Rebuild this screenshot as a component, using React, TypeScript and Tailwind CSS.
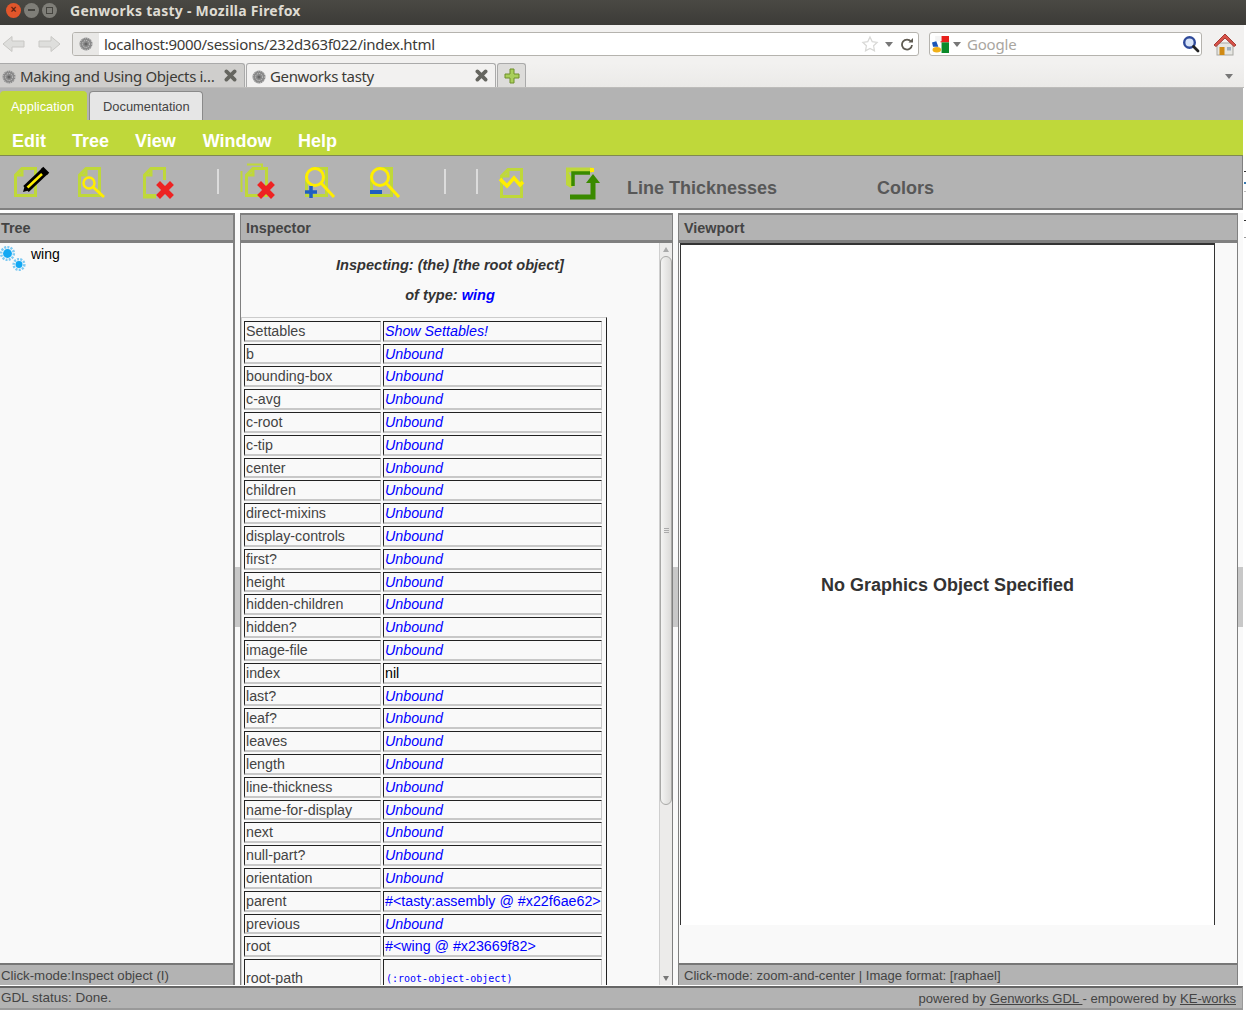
import React from "react";

const rows: [string, string][] = [
  ["Settables", "Show Settables!"],
  ["b", "Unbound"], ["bounding-box", "Unbound"], ["c-avg", "Unbound"], ["c-root", "Unbound"], ["c-tip", "Unbound"],
  ["center", "Unbound"], ["children", "Unbound"], ["direct-mixins", "Unbound"], ["display-controls", "Unbound"],
  ["first?", "Unbound"], ["height", "Unbound"], ["hidden-children", "Unbound"], ["hidden?", "Unbound"], ["image-file", "Unbound"],
  ["index", "nil"], ["last?", "Unbound"], ["leaf?", "Unbound"], ["leaves", "Unbound"], ["length", "Unbound"],
  ["line-thickness", "Unbound"], ["name-for-display", "Unbound"], ["next", "Unbound"], ["null-part?", "Unbound"], ["orientation", "Unbound"],
  ["parent", "#<tasty:assembly @ #x22f6ae62>"], ["previous", "Unbound"], ["root", "#<wing @ #x23669f82>"],
];

const LIME = "#bfd83a";
const YEL = "#ffee00";

function Page({ x, y = 167 }: { x: number; y?: number }) {
  return <path d={`M${x + 8} ${y + 1.5}H${x + 21.5}V${y + 28.5}H${x + 1.5}V${y + 8}Z M${x + 1.5} ${y + 8}H${x + 8}V${y + 1.5}`} fill="none" stroke={LIME} strokeWidth="3" />;
}
function RedX({ cx, cy }: { cx: number; cy: number }) {
  return <path d={`M${cx - 5} ${cy - 5}L${cx + 5} ${cy + 5}M${cx + 5} ${cy - 5}L${cx - 5} ${cy + 5}`} stroke="#ee2222" strokeWidth="5.5" strokeLinecap="square" />;
}
function Icon({ x, w, ml, children }: { x: number; w: number; ml: string; children: React.ReactNode }) {
  return <svg className={`shrink-0 mt-[4px] ${ml}`} width={w} height={42} viewBox={`${x} 160 ${w} 42`}>{children}</svg>;
}
function Sep({ ml }: { ml: string }) {
  return <div className={`w-[2px] h-[25px] mt-[13px] bg-[#dcdcdc] shrink-0 ${ml}`} />;
}
function Fav() {
  return (
    <svg width="14" height="14" viewBox="0 0 14 14" className="shrink-0">
      <circle cx="7" cy="7" r="6.5" fill="#8a8a8a" />
      <circle cx="7" cy="7" r="6" fill="none" stroke="#d8d8d8" strokeWidth="1" strokeDasharray="1 1.4" />
      <circle cx="7" cy="7" r="3.5" fill="none" stroke="#cfcfcf" strokeWidth="1" strokeDasharray="1 1" />
      <circle cx="7" cy="7" r="1.6" fill="#666" />
    </svg>
  );
}
function TabX() {
  return (
    <svg width="13" height="13" viewBox="0 0 12 12" className="shrink-0">
      <path d="M2.2 2.2L9.8 9.8M9.8 2.2L2.2 9.8" stroke="#65655f" strokeWidth="3.4" strokeLinecap="round" />
    </svg>
  );
}
function Arrow({ flip }: { flip?: boolean }) {
  return (
    <svg width="23" height="18" viewBox="0 0 23 18" className={flip ? "-scale-x-100" : ""}>
      <path d="M1 9L10 1.5V6H22V12H10V16.5Z" fill="#dededc" stroke="#c8c7c4" strokeWidth="1" strokeLinejoin="round" />
    </svg>
  );
}
function Caret() {
  return <div className="w-0 h-0 border-l-[4px] border-r-[4px] border-t-[5px] border-l-transparent border-r-transparent border-t-[#777]" />;
}
function Gear({ cx, cy, r }: { cx: number; cy: number; r: number }) {
  return (
    <g>
      <circle cx={cx} cy={cy} r={r + 1.3} fill="none" stroke="#7cc9f2" strokeWidth="2.6" strokeDasharray="2 1.2" />
      <circle cx={cx} cy={cy} r={r} fill="#d5effd" />
      <circle cx={cx} cy={cy} r={r - 0.6} fill="#12a8f3" />
    </g>
  );
}

function Cell({ w, children, extra = "" }: { w: string; children: React.ReactNode; extra?: string }) {
  return (
    <div className={`${w} h-full shrink-0 border-t border-l border-t-[#222] border-l-[#222] border-b-2 border-r border-b-[#c8c8c8] border-r-[#c8c8c8] overflow-hidden whitespace-nowrap leading-[19px] ${extra}`}>
      {children}
    </div>
  );
}

function PanelHead({ children, pl }: { children: React.ReactNode; pl: string }) {
  return (
    <div className={`h-[30px] shrink-0 bg-[#b3b3b3] border-t-2 border-b-[3px] border-t-[#808080] border-b-[#808080] font-bold text-[14.4px] leading-[27px] text-[#444] ${pl}`}>
      {children}
    </div>
  );
}
function Status({ children, size }: { children: React.ReactNode; size: string }) {
  return (
    <div className={`h-[22px] shrink-0 bg-[#b3b3b3] border-t-2 border-t-[#777] leading-[22px] pl-[1px] text-[#444] whitespace-nowrap ${size}`}>
      {children}
    </div>
  );
}

export default function App() {
  return (
    <div className="relative w-[1246px] h-[1011px] overflow-hidden bg-white font-['Liberation_Sans',Arial,sans-serif]">
      {/* window title */}
      <div className="h-[25px] bg-gradient-to-b from-[#4a4944] to-[#3c3b37] flex items-center pb-[5px]">
        <div className="w-[15px] h-[15px] ml-[6px] rounded-full bg-[#e2562b] text-[#5a2010] flex items-center justify-center text-[10px] font-bold leading-none">×</div>
        <div className="w-[15px] h-[15px] ml-[3px] rounded-full bg-[#7f7e78] flex items-center justify-center"><div className="w-[7px] h-[2px] bg-[#45443f]" /></div>
        <div className="w-[15px] h-[15px] ml-[3px] rounded-full bg-[#7f7e78] flex items-center justify-center"><div className="w-[7px] h-[7px] border border-[#45443f]" /></div>
        <span className="ml-[13px] text-[14px] font-bold text-[#dfdbd2] font-['Noto_Sans',sans-serif] tracking-[0.25px]">Genworks tasty - Mozilla Firefox</span>
      </div>

      {/* navigation bar */}
      <div className="w-[1244px] h-[38px] bg-[#f2f1f0] flex items-center">
        <div className="ml-[2px]"><Arrow /></div>
        <div className="ml-[13px]"><Arrow flip /></div>
        <div className="ml-[11px] w-[847px] h-[24px] bg-white border border-[#b5b3ae] rounded-[3px] flex items-center overflow-hidden">
          <div className="w-[26px] h-full bg-[#e9e8e6] flex items-center justify-center shrink-0"><Fav /></div>
          <span className="ml-[5px] text-[15px] text-[#3c3b37] font-['Noto_Sans',sans-serif] tracking-[-0.3px] whitespace-nowrap">localhost:9000/sessions/232d363f022/index.html</span>
          <div className="ml-auto flex items-center mr-[2px]">
            <svg width="18" height="18" viewBox="0 0 18 18"><path d="M9 2l2.2 4.6 5 .7-3.6 3.5.9 5L9 13.4 4.500 15.800l.9-5L1.800 7.300l5-.7z" fill="#fff" stroke="#d8d8d6" strokeWidth="1.200" /></svg>
            <div className="ml-[6px]"><Caret /></div>
            <svg className="ml-[7px] mr-[2px]" width="14" height="14" viewBox="0 0 14 14"><path d="M11 4.500A5 5 0 1 0 12 8" fill="none" stroke="#5f5b52" strokeWidth="1.800" /><path d="M8.500 5.500H13V1z" fill="#5f5b52" /></svg>
          </div>
        </div>
        <div className="ml-[10px] w-[273px] h-[24px] bg-white border border-[#b5b3ae] rounded-[3px] flex items-center">
          <svg className="ml-[2px] shrink-0" width="17" height="17" viewBox="0 0 16 16">
            <rect x="8" y="0" width="8" height="6" fill="#e8211c" /><rect x="9" y="6" width="7" height="10" fill="#0b8a2a" />
            <rect x="3" y="0" width="6" height="5" fill="#f4f4f4" /><path d="M0 6l4-1 2 5H1z" fill="#1b55b8" /><ellipse cx="4.500" cy="13" rx="4" ry="2.600" fill="#f0b018" />
          </svg>
          <div className="ml-[4px]"><Caret /></div>
          <span className="ml-[6px] text-[15px] text-[#a9a69f] font-['Noto_Sans',sans-serif] tracking-[-0.2px]">Google</span>
          <svg className="ml-auto mr-[1px]" width="18" height="18" viewBox="0 0 18 18">
            <circle cx="7.500" cy="7.500" r="5.300" fill="#d8e4f8" stroke="#2f4a9a" strokeWidth="2.400" /><path d="M11.500 11.500L16 16" stroke="#222" strokeWidth="2.800" strokeLinecap="round" />
          </svg>
        </div>
        <svg className="ml-[11px]" width="24" height="24" viewBox="0 0 24 24">
          <rect x="4" y="11" width="16" height="12" fill="#e6e6e2" stroke="#a8a8a2" strokeWidth="1" />
          <path d="M1 13L12 2l11 11-2 1.500L12 6 3 14.500z" fill="#d9534a" stroke="#a53c34" strokeWidth="1" />
          <rect x="6.500" y="15" width="5" height="8" fill="#d08a14" /><rect x="14" y="15" width="4" height="3.500" fill="#9fb0bf" />
        </svg>
      </div>

      {/* browser tabs */}
      <div className="w-[1244px] h-[25px] bg-gradient-to-b from-[#f2f1f0] to-[#ebeae8] border-b border-[#bdbcba] flex items-end text-[15px] text-[#3c3b37] font-['Noto_Sans',sans-serif] tracking-[-0.36px]">
        <div className="w-[245px] h-[24px] bg-[#cfcecc] border-t border-r border-[#aaa] rounded-tr-[3px] flex items-center pl-[2px] pr-[7px] pt-[2px]">
          <Fav /><span className="ml-[4px] whitespace-nowrap">Making and Using Objects i…</span><div className="ml-auto mb-[2px]"><TabX /></div>
        </div>
        <div className="ml-[1px] w-[250px] h-[24px] bg-[#f2f1f0] border-t border-x border-[#aaa] rounded-t-[3px] flex items-center pl-[5px] pr-[7px] pt-[2px]">
          <Fav /><span className="ml-[4px] whitespace-nowrap">Genworks tasty</span><div className="ml-auto mb-[2px]"><TabX /></div>
        </div>
        <div className="ml-[1px] w-[29px] h-[24px] bg-[#dddcda] border border-b-0 border-[#aaa] rounded-t-[3px] flex items-center justify-center">
          <svg width="16" height="16" viewBox="0 0 16 16"><path d="M6 1h4v5h5v4h-5v5H6v-5H1V6h5z" fill="#a9cf5a" stroke="#6f8f2a" strokeWidth="1" /></svg>
        </div>
        <div className="ml-auto mr-[11px] mb-[8px]"><Caret /></div>
      </div>

      {/* application */}
      <div className="w-[1243px]">
        <div className="h-[32px] bg-[#b3b3b3] flex items-end text-[12.9px]">
          <div className="w-[87px] h-[29px] bg-[#bfd83a] rounded-t-[4px] text-white pl-[11px] leading-[31px]">Application</div>
          <div className="ml-[2px] w-[114px] h-[29px] bg-[#e6e6e6] border border-b-0 border-[#8a8a8a] rounded-t-[4px] text-[#444] pl-[13px] leading-[30px]">Documentation</div>
        </div>
        <div className="h-[36px] bg-[#bfd83a] border-b border-[#808a50] flex items-center pt-[8px] text-white font-bold text-[18px]">
          <span className="ml-[12px]">Edit</span>
          <span className="ml-[26px]">Tree</span>
          <span className="ml-[26px]">View</span>
          <span className="ml-[27px]">Window</span>
          <span className="ml-[26.5px]">Help</span>
        </div>
        <div className="h-[54px] bg-[#b3b3b3] border-r border-r-[#808080] border-b-2 border-b-[#808080] flex items-start">
          <Icon x={12} w={40} ml="ml-[12px]">
            <Page x={14} />
            <path d="M26 189L45 171" stroke="#000" strokeWidth="8" /><path d="M27 188L42 174" stroke={YEL} strokeWidth="2.500" />
            <path d="M42 168l6 6" stroke="#000" strokeWidth="3.500" /><path d="M25 185l-2 7 7-2z" fill="#000" />
          </Icon>
          <Icon x={76} w={32} ml="ml-[24px]">
            <Page x={78} />
            <circle cx="89" cy="183" r="5.500" fill="none" stroke={YEL} strokeWidth="2.500" /><path d="M93 187L104 197" stroke={YEL} strokeWidth="2.800" />
          </Icon>
          <Icon x={141} w={36} ml="ml-[33px]">
            <Page x={143} /><rect x="156" y="180" width="20" height="20" fill="#b3b3b3" /><path d="M143 197H156" stroke={LIME} strokeWidth="3" /><RedX cx={165} cy={190} />
          </Icon>
          <Sep ml="ml-[40px]" />
          <Icon x={239} w={38} ml="ml-[20px]">
            <path d="M247 164.500H262V168M241.500 171V192" fill="none" stroke={LIME} strokeWidth="2" />
            <Page x={245} /><RedX cx={266} cy={190} />
          </Icon>
          <Icon x={303} w={34} ml="ml-[26px]">
            <Page x={305} />
            <circle cx="315" cy="177" r="8.500" fill="#b3b3b3" stroke={YEL} strokeWidth="3" /><path d="M321 183L334 197" stroke={YEL} strokeWidth="3" />
            <path d="M305 192H317M311 186V198" stroke="#1f5fc0" strokeWidth="3.500" />
          </Icon>
          <Icon x={368} w={34} ml="ml-[31px]">
            <Page x={370} />
            <circle cx="380" cy="177" r="8.500" fill="#b3b3b3" stroke={YEL} strokeWidth="3" /><path d="M386 183L399 197" stroke={YEL} strokeWidth="3" />
            <path d="M370 192H382" stroke="#1f5fc0" strokeWidth="4" />
          </Icon>
          <Sep ml="ml-[42px]" />
          <Sep ml="ml-[30px]" />
          <Icon x={498} w={28} ml="ml-[20px]">
            <Page x={500} y={168} />
            <path d="M500 179L507 186L514 178L520 185L523 182" fill="none" stroke={YEL} strokeWidth="3.500" />
          </Icon>
          <Icon x={562} w={42} ml="ml-[36px]">
            <path d="M566 170H592" stroke={LIME} strokeWidth="5" /><path d="M566 168V185l5 3 4-4" fill={LIME} />
            <path d="M590 168h4v4h-4z" fill={YEL} />
            <path d="M573 186V173H590" fill="none" stroke="#3a8a00" strokeWidth="3.500" />
            <path d="M570 197H593V180" fill="none" stroke="#3a8a00" strokeWidth="5" />
            <path d="M586 183L593 174L600 183z" fill="#3a8a00" />
          </Icon>
          <span className="ml-[23px] w-[250px] shrink-0 mt-[21px] font-bold text-[18px] leading-[22px] text-[#585858]">Line Thicknesses</span>
          <span className="mt-[21px] font-bold text-[18px] leading-[22px] text-[#585858]">Colors</span>
        </div>

        {/* panels */}
        <div className="mt-[3px] h-[772px] flex bg-[#f9f9f9]">
          <section className="w-[235px] shrink-0 flex flex-col border-r-2 border-r-[#808080]">
            <PanelHead pl="pl-[1px]">Tree</PanelHead>
            <div className="flex-1 min-h-0 flex items-start">
              <svg className="mt-[2px] shrink-0" width="28" height="28" viewBox="0 0 28 28">
                <Gear cx={7.500} cy={8.500} r={5} /><Gear cx={19} cy={19.500} r={4} />
              </svg>
              <span className="ml-[3px] text-[14px] leading-[20px] mt-[1px] text-black">wing</span>
            </div>
            <Status size="text-[13.25px]">Click-mode:Inspect object (I)</Status>
          </section>

          <div className="w-[5px] shrink-0 flex items-center"><div className="w-full h-[60px] bg-[#c8c8c8] mt-[-4px]" /></div>

          <section className="w-[433px] shrink-0 flex flex-col border-x border-[#808080] relative">
            <PanelHead pl="pl-[5px]">Inspector</PanelHead>
            <div className="flex-1 min-h-0 flex overflow-hidden">
              <div className="w-[418px] shrink-0 overflow-hidden text-[14.25px]">
                <div className="text-center font-bold italic text-[#333] text-[14.55px]">
                  <div className="h-[24px] mt-[10px] leading-[24px]">Inspecting: (the) [the root object]</div>
                  <div className="h-[24px] mt-[6px] leading-[24px]">of type: <span className="text-[#0000ff]">wing</span></div>
                </div>
                <div className="mt-[10px] w-[366px] border-t border-l border-t-[#ccc] border-l-[#ccc] border-r border-r-[#222] pl-[2px] pt-[2.8px] pb-[4px] flex flex-col gap-[2px] text-[#444]">
                  {rows.map(([k, v]) => (
                    <div key={k} className="h-[20.8px] flex gap-[2px] shrink-0">
                      <Cell w="w-[137px]" extra="pl-[1px]">{k}</Cell>
                      <Cell w="w-[219px]" extra="pl-[1px]">
                        {v === "nil" ? <span className="text-black">nil</span>
                          : v.startsWith("#") ? <span className="text-[#0000ff]">{v}</span>
                          : <span className="text-[#0000ff] italic">{v}</span>}
                      </Cell>
                    </div>
                  ))}
                  <div className="h-[45px] flex gap-[2px] shrink-0">
                    <Cell w="w-[137px]" extra="pl-[1px] !leading-[36px]">root-path</Cell>
                    <Cell w="w-[219px]" extra="pl-[2px] !leading-[35px]">
                      <span className="text-[#0000ff] text-[10px] font-['DejaVu_Sans_Mono',monospace]">(:root-object-object)</span>
                    </Cell>
                  </div>
                </div>
              </div>
              <div className="w-[13px] shrink-0 bg-[#ecebea] border-l border-[#cfcfcf] flex flex-col items-center relative">
                <div className="mt-[4px] w-0 h-0 border-l-[3.500px] border-r-[3.500px] border-b-[5px] border-l-transparent border-r-transparent border-b-[#aaa]" />
                <div className="mt-[4px] w-[12px] h-[549px] bg-gradient-to-r from-[#f4f4f3] to-[#dcdbd9] border border-[#a8a8a6] rounded-[6px] flex flex-col items-center justify-center gap-[1px]">
                  <div className="w-[5px] h-[1px] bg-[#aaa]" /><div className="w-[5px] h-[1px] bg-[#aaa]" /><div className="w-[5px] h-[1px] bg-[#aaa]" />
                </div>
                <div className="mt-auto mb-[4px] w-0 h-0 border-l-[3.500px] border-r-[3.500px] border-t-[5px] border-l-transparent border-r-transparent border-t-[#777]" />
              </div>
            </div>
          </section>

          <div className="w-[5px] shrink-0 flex items-center"><div className="w-full h-[60px] bg-[#c8c8c8] mt-[-4px]" /></div>

          <section className="w-[560px] shrink-0 flex flex-col border-x border-[#808080]">
            <PanelHead pl="pl-[5px]">Viewport</PanelHead>
            <div className="flex-1 min-h-0 flex flex-col">
              <div className="ml-[1px] w-[535px] h-[682px] shrink-0 bg-white border-t-2 border-x border-t-[#333] border-x-[#333] flex items-center justify-center">
                <span className="font-bold text-[18px] text-[#333]">No Graphics Object Specified</span>
              </div>
            </div>
            <Status size="text-[13.05px]"><span className="pl-[4px]">Click-mode: zoom-and-center | Image format: [raphael]</span></Status>
          </section>

          <div className="w-[5px] shrink-0 flex items-center"><div className="w-full h-[60px] bg-[#c8c8c8] mt-[-4px]" /></div>
        </div>

        {/* footer */}
        <div className="h-[24px] mt-[1px] bg-[#b3b3b3] border-t-2 border-b-2 border-t-[#666] border-b-[#999] border-r border-r-[#999] flex items-center justify-between text-[13.1px] text-[#444] pl-[1px] pr-[6px] pt-[1px]">
          <span className="text-[13.5px]">GDL status: Done.</span>
          <span>powered by <span className="underline">Genworks GDL </span> - empowered by <span className="underline">KE-works</span></span>
        </div>
      </div>

      {/* slivers of the window behind */}
      <div className="absolute left-[1244px] top-[171px] w-[2px] h-[1px] bg-[#333]" />
      <div className="absolute left-[1244px] top-[182px] w-[2px] h-[2px] bg-[#3a7ab0]" />
      <div className="absolute left-[1244px] top-[191px] w-[2px] h-[1px] bg-[#bbb]" />
      <div className="absolute left-[1244px] top-[220px] w-[2px] h-[1px] bg-[#333]" />
      <div className="absolute left-[1244px] top-[237px] w-[2px] h-[1px] bg-[#999]" />
    </div>
  );
}
